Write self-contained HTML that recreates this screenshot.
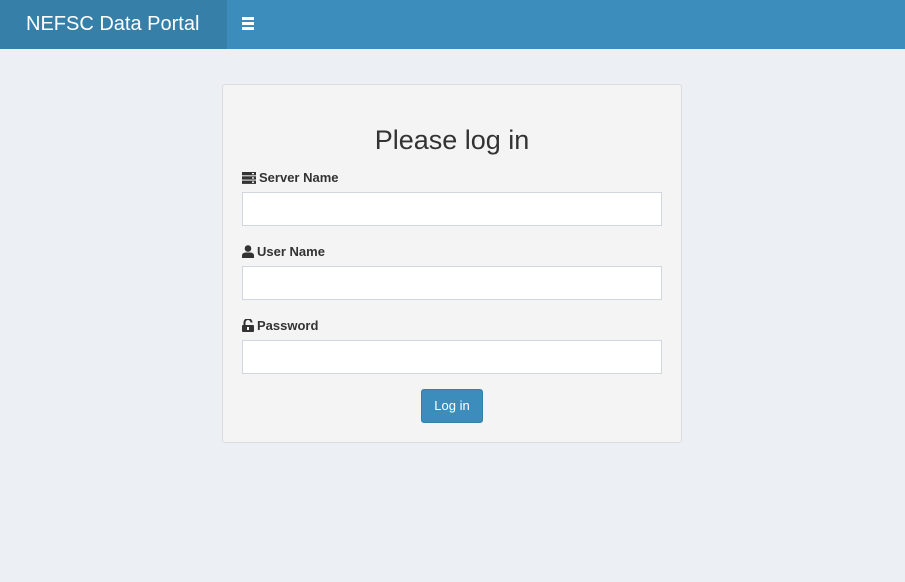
<!DOCTYPE html>
<html><head><style>
*{box-sizing:border-box;margin:0;padding:0}
body{width:905px;height:582px;background:#ecf0f5;font-family:"Liberation Sans",sans-serif;position:relative;overflow:hidden}
.top{position:absolute;left:0;top:0;width:905px;height:49px;background:#3c8dbc}
.logo{position:absolute;left:0;top:0;width:227px;height:49px;background:#367fa9;color:#fff;font-size:20px;line-height:48px;padding-left:26px}
.burger{position:absolute;left:242px;top:17px}
.burger i{display:block;width:12px;height:2.5px;background:#fff;margin-bottom:2.5px}
.box{position:absolute;left:222px;top:84px;width:460px;height:359px;background:#f4f4f4;border:1px solid #dcdcdc;border-radius:3px}
h2{position:absolute;top:40px;width:100%;text-align:center;font-weight:normal;font-size:27px;color:#333}
.lab{position:absolute;left:19px;font-size:13px;font-weight:bold;color:#333;display:flex;align-items:center;gap:3px}
.inp{position:absolute;left:19px;width:420px;height:34px;background:#fff;border:1px solid #d2d6de}
.btn{position:absolute;left:198px;top:304px;width:62px;height:34px;background:#3c8dbc;border:1px solid #367fa9;border-radius:3px;color:#fff;font-size:13px;text-align:center;line-height:32px}
</style></head><body>
<div class="top"><div class="logo">NEFSC Data Portal</div><div class="burger"><i></i><i></i><i></i></div></div>
<div class="box">
<h2>Please log in</h2>
<div class="lab" style="top:85px"><svg width="14" height="12" viewBox="0 0 14 12"><rect y="0" width="14" height="3.3" fill="#333"/><rect y="4.3" width="14" height="3.3" fill="#333"/><rect y="8.6" width="14" height="3.3" fill="#333"/><rect x="10" y="1" width="2" height="1.3" fill="#fff"/><rect x="10" y="5.3" width="2" height="1.3" fill="#fff"/><rect x="10" y="9.6" width="2" height="1.3" fill="#fff"/></svg>Server Name</div>
<div class="inp" style="top:107px"></div>
<div class="lab" style="top:159px"><svg width="12" height="13" viewBox="0 0 12 13"><circle cx="6" cy="3.5" r="3.3" fill="#333"/><path d="M0 13v-2.5C0 8.5 2 7.5 4 7.5h4c2 0 4 1 4 3V13z" fill="#333"/></svg>User Name</div>
<div class="inp" style="top:181px"></div>
<div class="lab" style="top:233px"><svg width="12" height="13" viewBox="0 0 12 13"><path d="M2.5 6V3.5a3.5 3.5 0 0 1 7 0" stroke="#333" stroke-width="2" fill="none"/><rect x="0" y="6" width="12" height="7" rx="1" fill="#333"/><rect x="5" y="8" width="2" height="3" fill="#fff"/></svg>Password</div>
<div class="inp" style="top:255px"></div>
<div class="btn">Log in</div>
</div>
</body></html>
